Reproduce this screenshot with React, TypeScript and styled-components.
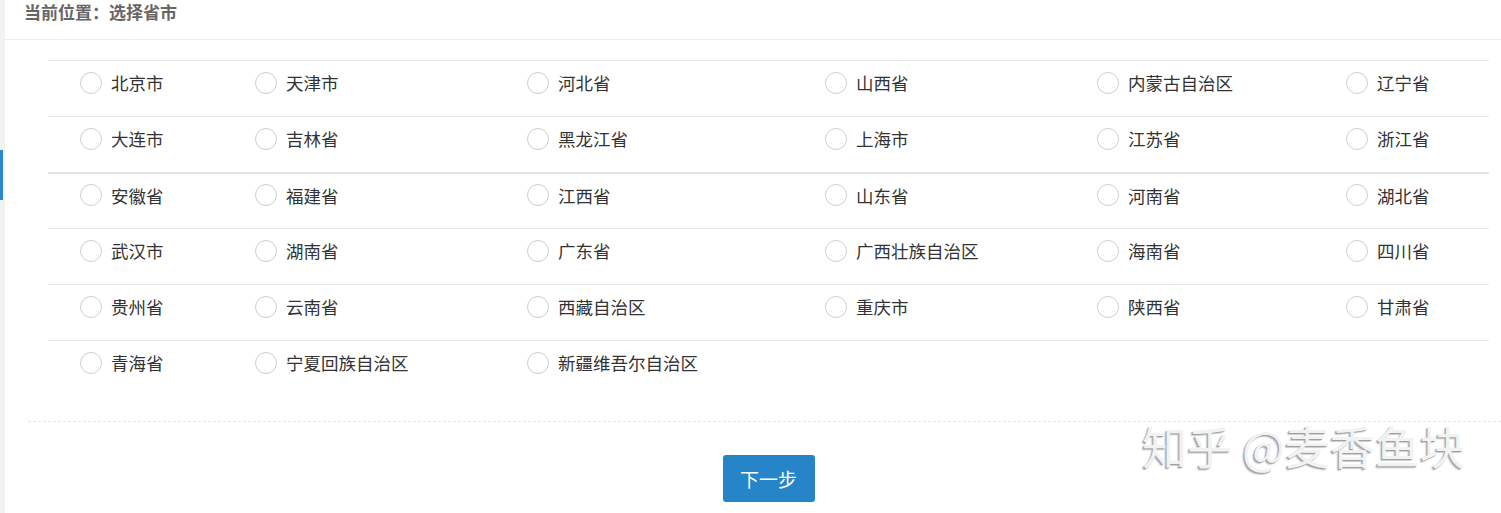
import React from "react";
import styled, { createGlobalStyle } from "styled-components";

const Global = createGlobalStyle`
  html, body { margin: 0; padding: 0; background: #fff; }
  body { font-family: "Noto Sans CJK SC", "Noto Sans", sans-serif; color: #333; }
`;

const Page = styled.div`
  position: relative;
  display: flex;
  width: 1501px;
  height: 513px;
  overflow: hidden;
`;

const Strip = styled.div`
  width: 5px;
  flex: none;
  background: #f2f2f2;
  padding-top: 150px;
  box-sizing: border-box;
`;

const StripMark = styled.div`
  width: 3px;
  height: 50px;
  background: #2a88cf;
`;

const Main = styled.div`
  flex: 1;
  display: flex;
  flex-direction: column;
`;

const Header = styled.div`
  height: 40px;
  box-sizing: border-box;
  border-bottom: 1px solid #ececec;
  padding: 0 0 0 19px;
  font-size: 17px;
  font-weight: bold;
  color: #666;
  line-height: 24px;
`;

const Table = styled.div`
  margin: 20px 0 0 43px;
  width: 1441px;
  display: grid;
  grid-template-columns: 175px 272px 298px 272px 249px 175px;
`;

const Cell = styled.label<{ $thick?: boolean; $line?: boolean }>`
  height: 56px;
  box-sizing: border-box;
  border-top: ${(p) => (p.$line ? (p.$thick ? "2px solid #e2e2e2" : "1px solid #e8e8e8") : "none")};
  display: flex;
  align-items: center;
  padding: 0 0 12px 32px;
  gap: 9px;
  font-size: 17.5px;
  color: #333;
`;

const Radio = styled.span`
  width: 20px;
  height: 20px;
  border-radius: 50%;
  border: 1px solid #cfcfcf;
  background: #fff;
  flex: none;
`;

const Dashed = styled.div`
  margin: 25px 0 0 23px;
  border-top: 1px dashed #e6e6e6;
`;

const Footer = styled.div`
  display: flex;
  justify-content: center;
  padding: 33px 0 0 31px;
`;

const Button = styled.button`
  width: 92px;
  height: 47px;
  border: none;
  border-radius: 3px;
  background: #2585c8;
  color: #fff;
  font-family: "Noto Sans CJK SC", sans-serif;
  font-size: 19px;
  padding: 0;
`;

const Watermark = styled.div`
  position: absolute;
  left: 1142px;
  top: 416px;
  font-size: 45px;
  line-height: 60px;
  color: #f2f2f2;
  text-shadow: -1px 1px 0 #a0a0a0, -2px 2px 1px #cccccc;
  white-space: pre;
  font-family: "Noto Sans CJK SC", sans-serif;
`;

const items = [
  "北京市", "天津市", "河北省", "山西省", "内蒙古自治区", "辽宁省",
  "大连市", "吉林省", "黑龙江省", "上海市", "江苏省", "浙江省",
  "安徽省", "福建省", "江西省", "山东省", "河南省", "湖北省",
  "武汉市", "湖南省", "广东省", "广西壮族自治区", "海南省", "四川省",
  "贵州省", "云南省", "西藏自治区", "重庆市", "陕西省", "甘肃省",
  "青海省", "宁夏回族自治区", "新疆维吾尔自治区",
];

export default function App() {
  return (
    <>
      <Global />
      <Page>
        <Strip>
          <StripMark />
        </Strip>
        <Main>
          <Header>当前位置：选择省市</Header>
          <Table>
            {items.map((name, i) => {
              const row = Math.floor(i / 6);
              return (
                <Cell key={name} $line={true} $thick={row === 2}>
                  <Radio />
                  {name}
                </Cell>
              );
            })}
            <Cell $line={true} />
            <Cell $line={true} />
            <Cell $line={true} />
          </Table>
          <Dashed />
          <Footer>
            <Button>下一步</Button>
          </Footer>
        </Main>
        <Watermark>知乎 @麦香鱼块</Watermark>
      </Page>
    </>
  );
}
